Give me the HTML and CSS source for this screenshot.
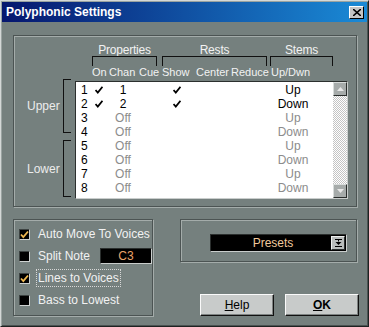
FILE: index.html
```html
<!DOCTYPE html>
<html lang="en">
<head>
  <meta charset="UTF-8">
  <title>Polyphonic Settings</title>
  <link rel="stylesheet" href="styles.css">
</head>
<body>
  <div class="window">
    <div class="titlebar">
      <span class="title">Polyphonic Settings</span>
      <span class="close">
        <svg width="8" height="7" viewBox="0 0 8 7"><path d="M0 0l8 7M8 0L0 7" stroke="#000" stroke-width="1.6"/></svg>
      </span>
    </div>

    <div class="content">
      <!-- Voices table -->
      <div class="group voices">
        <div class="heads">
          <div class="head props"><span>Properties</span><div class="bracket"></div></div>
          <div class="head rests"><span>Rests</span><div class="bracket"></div></div>
          <div class="head stems"><span>Stems</span><div class="bracket"></div></div>
        </div>
        <div class="cols">
          <span class="c-on">On</span>
          <span class="c-chan">Chan</span>
          <span class="c-cue">Cue</span>
          <span class="c-show">Show</span>
          <span class="c-center">Center</span>
          <span class="c-reduce">Reduce</span>
          <span class="c-stem">Up/Dwn</span>
        </div>
        <div class="body">
          <div class="side">
            <div class="part upper"><span>Upper</span><div class="vbracket"></div></div>
            <div class="part lower"><span>Lower</span><div class="vbracket"></div></div>
          </div>
          <div class="list">
            <div class="rows">
              <div class="row">
                <span>1</span>
                <span class="mid"><svg class="tick" width="8" height="8" viewBox="0 0 8 8"><path d="M0.5 4l2.3 2.6L7.5 0.8" fill="none" stroke="#000" stroke-width="1.8"/></svg></span>
                <span class="mid">1</span><span></span>
                <span class="mid"><svg class="tick" width="8" height="8" viewBox="0 0 8 8"><path d="M0.5 4l2.3 2.6L7.5 0.8" fill="none" stroke="#000" stroke-width="1.8"/></svg></span>
                <span></span><span></span>
                <span class="mid">Up</span>
              </div>
              <div class="row">
                <span>2</span>
                <span class="mid"><svg class="tick" width="8" height="8" viewBox="0 0 8 8"><path d="M0.5 4l2.3 2.6L7.5 0.8" fill="none" stroke="#000" stroke-width="1.8"/></svg></span>
                <span class="mid">2</span><span></span>
                <span class="mid"><svg class="tick" width="8" height="8" viewBox="0 0 8 8"><path d="M0.5 4l2.3 2.6L7.5 0.8" fill="none" stroke="#000" stroke-width="1.8"/></svg></span>
                <span></span><span></span>
                <span class="mid">Down</span>
              </div>
              <div class="row off"><span>3</span><span></span><span class="mid">Off</span><span></span><span></span><span></span><span></span><span class="mid">Up</span></div>
              <div class="row off"><span>4</span><span></span><span class="mid">Off</span><span></span><span></span><span></span><span></span><span class="mid">Down</span></div>
              <div class="row off"><span>5</span><span></span><span class="mid">Off</span><span></span><span></span><span></span><span></span><span class="mid">Up</span></div>
              <div class="row off"><span>6</span><span></span><span class="mid">Off</span><span></span><span></span><span></span><span></span><span class="mid">Down</span></div>
              <div class="row off"><span>7</span><span></span><span class="mid">Off</span><span></span><span></span><span></span><span></span><span class="mid">Up</span></div>
              <div class="row off"><span>8</span><span></span><span class="mid">Off</span><span></span><span></span><span></span><span></span><span class="mid">Down</span></div>
            </div>
            <div class="scroll">
              <div class="sbtn"><svg width="7" height="4" viewBox="0 0 7 4"><path d="M3.5 0L7 4H0z" fill="#e8e8e8"/></svg></div>
              <div class="track"></div>
              <div class="sbtn"><svg width="7" height="4" viewBox="0 0 7 4"><path d="M0 0h7L3.5 4z" fill="#e8e8e8"/></svg></div>
            </div>
          </div>
        </div>
      </div>

      <div class="bottom">
        <!-- Options -->
        <div class="group options">
          <div class="opt">
            <span class="cb"><svg width="9" height="9" viewBox="0 0 9 9"><path d="M1 4.5l2.3 2.6L8 1.5" fill="none" stroke="#efb850" stroke-width="1.8"/></svg></span>
            <span class="lbl">Auto Move To Voices</span>
          </div>
          <div class="opt">
            <span class="cb"></span>
            <span class="lbl">Split Note</span>
            <span class="note">C3</span>
          </div>
          <div class="opt">
            <span class="cb"><svg width="9" height="9" viewBox="0 0 9 9"><path d="M1 4.5l2.3 2.6L8 1.5" fill="none" stroke="#efb850" stroke-width="1.8"/></svg></span>
            <span class="lbl focus">Lines to Voices</span>
          </div>
          <div class="opt">
            <span class="cb"></span>
            <span class="lbl">Bass to Lowest</span>
          </div>
        </div>

        <div class="right">
          <div class="group presets">
            <div class="dropdown">
              <span class="dd-text">Presets</span>
              <span class="dd-btn">
                <svg width="7" height="8" viewBox="0 0 7 8"><path d="M0 0.5h7M3.5 0.5v2" stroke="#000" stroke-width="1"/><path d="M0.5 3h6L3.5 6z" fill="#000"/><path d="M0 7.5h7" stroke="#000" stroke-width="1"/></svg>
              </span>
            </div>
          </div>
          <div class="buttons">
            <button class="btn"><u>H</u>elp</button>
            <button class="btn ok"><u>O</u>K</button>
          </div>
        </div>
      </div>
    </div>
  </div>
</body>
</html>
```

FILE: styles.css
```css
* {
  box-sizing: border-box;
}

body {
  margin: 0;
  font-family: 'Liberation Sans', Arial, sans-serif;
  font-size: 11px;
  background: #75807e;
}

.window {
  width: 369px;
  height: 327px;
  background: #75807e;
  border: 1px solid;
  border-color: #d4d8d7 #1e2221 #1e2221 #d4d8d7;
  box-shadow: inset 1px 1px 0 #9aa3a1, inset -1px -1px 0 #4b5352;
  padding: 1px;
}

/* Title bar */
.titlebar {
  height: 20px;
  background: linear-gradient(to right, #06166e, #1a8ad6);
  display: flex;
  align-items: center;
  padding: 0 3px 0 4px;
}
.title {
  flex: 1;
  color: #fff;
  font-weight: bold;
  font-size: 12px;
}
.close {
  width: 15px;
  height: 13px;
  background: #c4c4c4;
  border: 1px solid;
  border-color: #fff #000 #000 #fff;
  display: flex;
  align-items: center;
  justify-content: center;
}

.content {
  padding: 13px 0 0 11px;
}

/* Group boxes */
.group {
  border: 1px solid #4c5453;
  box-shadow: 1px 1px 0 #a4acaa, inset 1px 1px 0 #a4acaa;
}

.voices {
  width: 344px;
  height: 172px;
  padding: 8px 0 0 0;
  color: #f2f2f2;
}

.heads {
  display: flex;
  margin-left: 78px;
}
.head {
  display: flex;
  flex-direction: column;
  align-items: center;
}
.head span {
  line-height: 12px;
  font-size: 12px;
  letter-spacing: -0.2px;
}
.props { width: 65px; }
.rests { width: 105px; margin-left: 5px; }
.stems { width: 63px; margin-left: 3px; }
.bracket {
  width: 100%;
  height: 10px;
  border: 1px solid #101010;
  border-bottom: none;
}

.cols {
  display: flex;
  margin-left: 78px;
  line-height: 13px;
  white-space: nowrap;
}
.c-on { width: 17px; }
.c-chan { width: 30px; }
.c-cue { width: 23px; }
.c-show { width: 34px; }
.c-center { width: 35px; }
.c-reduce { width: 40px; }

.body {
  display: flex;
}
.side {
  width: 61px;
  display: flex;
  flex-direction: column;
}
.part {
  display: flex;
  align-items: center;
}
.part span {
  flex: 1;
  padding-left: 13px;
  font-size: 12px;
  color: #ececec;
}
.upper { height: 54px; }
.lower { height: 57px; margin-top: 7px; }
.vbracket {
  width: 8px;
  height: 100%;
  margin-right: 4px;
  border: 1px solid #101010;
  border-right: none;
}

.list {
  width: 273px;
  height: 118px;
  margin-top: 2px;
  display: flex;
  background: #fff;
  border: 1px solid;
  border-color: #2b2f2e #c9cdcc #c9cdcc #2b2f2e;
}
.rows {
  flex: 1;
  padding: 1px 0 0 5px;
  color: #000;
}
.row {
  display: grid;
  grid-template-columns: 10px 16px 32px 22px 32px 34px 40px 52px;
  height: 14px;
  line-height: 14px;
  font-size: 12px;
  align-items: center;
}
.row.off .mid {
  color: #8c8c8c;
}
.mid {
  text-align: center;
}
.tick {
  display: block;
  margin: 0 auto;
}

.scroll {
  width: 14px;
  display: flex;
  flex-direction: column;
}
.track {
  flex: 1;
  background: repeating-conic-gradient(#c4c4c4 0 25%, #fff 0 50%) 0 0 / 2px 2px;
}
.sbtn {
  height: 14px;
  background: #a6abaa;
  border: 1px solid;
  border-color: #d8dcdb #2a2e2d #2a2e2d #d8dcdb;
  display: flex;
  align-items: center;
  justify-content: center;
}

/* Bottom part */
.bottom {
  display: flex;
  margin-top: 12px;
}
.options {
  width: 140px;
  height: 97px;
  padding-top: 3px;
  color: #f2f2f2;
  font-size: 12px;
}
.opt {
  display: flex;
  align-items: center;
  height: 22px;
  padding-left: 5px;
}
.cb {
  width: 11px;
  height: 11px;
  background: #000;
  border: 1px solid;
  border-color: #3c4241 #cdd1d0 #cdd1d0 #3c4241;
  margin-right: 6px;
  display: flex;
  align-items: center;
  justify-content: center;
}
.lbl {
  padding: 1px 1px;
  border: 1px solid transparent;
}
.lbl.focus {
  border: 1px dotted #d8d8d8;
}
.note {
  width: 52px;
  height: 16px;
  margin-left: 8px;
  background: #000;
  border: 1px solid;
  border-color: #2b2f2e #c9cdcc #c9cdcc #2b2f2e;
  color: #e8a36a;
  text-align: center;
  line-height: 14px;
}

.right {
  margin-left: 27px;
  display: flex;
  flex-direction: column;
}
.presets {
  width: 177px;
  height: 43px;
  padding: 14px 0 0 29px;
}
.dropdown {
  width: 137px;
  height: 18px;
  background: #000;
  border: 1px solid;
  border-color: #2b2f2e #c9cdcc #c9cdcc #2b2f2e;
  display: flex;
  align-items: center;
  padding-right: 1px;
}
.dd-text {
  flex: 1;
  text-align: center;
  color: #f0c99c;
  font-size: 12px;
  padding-left: 4px;
}
.dd-btn {
  width: 14px;
  height: 14px;
  background: #b9bdbc;
  border: 1px solid;
  border-color: #eef0ef #2a2e2d #2a2e2d #eef0ef;
  display: flex;
  align-items: center;
  justify-content: center;
}

.buttons {
  display: flex;
  gap: 11px;
  margin: 32px 0 0 20px;
}
.btn {
  width: 74px;
  height: 22px;
  padding: 0;
  background: #c8cbca;
  border: 1px solid;
  border-color: #fafafa #111 #111 #fafafa;
  box-shadow: inset -1px -1px 0 #7d8281;
  font-family: 'Liberation Sans', Arial, sans-serif;
  font-size: 12px;
  color: #000;
}
.btn.ok {
  font-weight: bold;
}
```
